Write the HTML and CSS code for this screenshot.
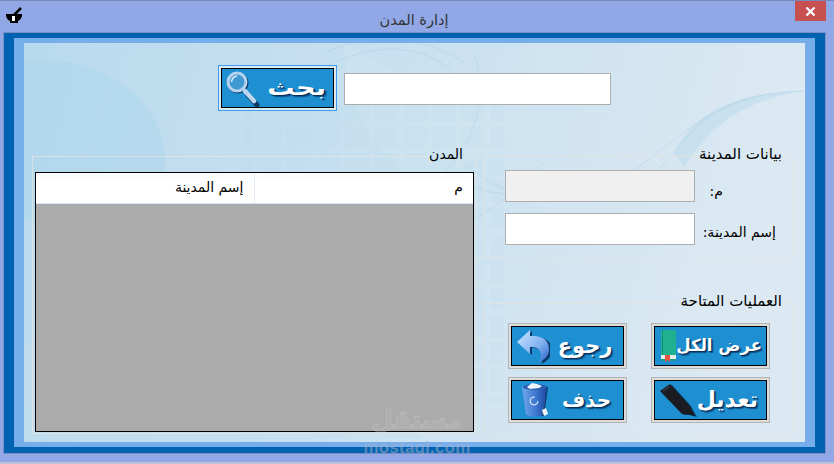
FILE: index.html
```html
<!DOCTYPE html>
<html lang="ar">
<head>
<meta charset="utf-8">
<title>إدارة المدن</title>
<link rel="stylesheet" href="styles.css">
</head>
<body>
<div class="window">
  <header class="titlebar">
    <svg class="app-icon" width="20" height="20" viewBox="0 0 20 20">
      <path d="M10 8 L17 1" stroke="#000" stroke-width="2.500" fill="none"/>
      <path d="M2 7 H18 V9 C17 12 16 13 14 14 V16 H6 V14 C4 13 3 12 2 9 Z" fill="#000"/>
      <rect x="8" y="9" width="3" height="5" fill="#fff"/>
    </svg>
    <h1 class="title">إدارة المدن</h1>
    <button class="close" type="button" aria-label="إغلاق">
      <svg width="11" height="9" viewBox="0 0 11 9"><path d="M1.500 0.500 L9.500 8.500 M9.500 0.500 L1.500 8.500" stroke="#fff" stroke-width="2.200" fill="none"/></svg>
    </button>
  </header>

  <div class="frame-dark">
    <div class="frame-light">
      <main class="content">
        <svg class="backdrop" width="781" height="399" viewBox="0 0 781 399" aria-hidden="true">
          <defs>
            <linearGradient id="bgbase" x1="0" y1="0" x2="1" y2="0.15">
              <stop offset="0" stop-color="#b9daed"/>
              <stop offset="0.45" stop-color="#c8e0f0"/>
              <stop offset="1" stop-color="#dce9f2"/>
            </linearGradient>
            <pattern id="tiles" width="29" height="27" patternUnits="userSpaceOnUse">
              <rect x="2" y="2" width="24" height="22" fill="#a9d0ea" opacity="0.09"/>
            </pattern>
          </defs>
          <rect width="781" height="399" fill="url(#bgbase)"/>
          <path d="M0 18 C70 12 130 45 140 105 C143 125 140 150 130 170 C80 190 30 190 0 175 Z" fill="#a9d5ec" opacity="0.42"/>
          <path d="M320 0 C390 40 430 60 520 40 C500 90 460 130 400 130 C350 120 320 60 320 0 Z" fill="#d4e7f3" opacity="0.3"/>
          <rect x="220" y="60" width="260" height="300" fill="url(#tiles)"/>
          <g fill="none" stroke="#a6cfe9" opacity="0.4">
            <path d="M385 160 C440 120 470 70 450 10"/>
            <path d="M410 190 C440 185 470 170 520 120"/>
            <path d="M420 132 C470 160 560 165 620 120 C660 90 690 60 750 50"/>
            <path d="M440 120 C500 175 600 170 650 110 C680 70 710 50 780 48"/>
            <path d="M300 10 C340 -10 400 -10 440 20"/>
            <path d="M310 20 C350 0 400 0 430 30"/>
          </g>
          <path d="M650 110 C670 70 710 50 780 48 C730 56 690 75 660 125 Z" fill="#a6cfe9" opacity="0.3"/>
          <path d="M0 300 C120 260 280 330 400 395 L0 398 Z" fill="#c2deef" opacity="0.35"/>
        </svg>

        <section class="search-row">
          <button class="btn btn-focus" type="button">
            <span class="btn-face">
              <svg class="btn-icon" width="38" height="38" viewBox="0 0 38 38">
                <path d="M25 25 L34 35" stroke="#0b3a68" stroke-width="5" stroke-linecap="round" transform="translate(1 1)"/>
                <circle cx="16" cy="14" r="9" fill="none" stroke="#0b3a68" stroke-width="3"/>
                <path d="M23 22 L32 32" stroke="#bcd6ef" stroke-width="4.500" stroke-linecap="round"/>
                <circle cx="15" cy="13" r="9" fill="#3f9ad2" stroke="#b5d2ee" stroke-width="3"/>
                <path d="M9.500 13 C10 9 12 7.500 15 7" fill="none" stroke="#d9ebf8" stroke-width="1.500"/>
              </svg>
              <span class="btn-label label-search"><span class="stretch">بحث</span></span>
            </span>
          </button>
          <input class="field field-search" type="text" aria-label="بحث">
        </section>

        <section class="columns">
          <fieldset class="group group-cities" dir="rtl">
            <legend>المدن</legend>
            <div class="grid-view">
              <table class="grid-table">
                <thead>
                  <tr><th class="col-id">م</th><th class="col-name">إسم المدينة</th></tr>
                </thead>
              </table>
            </div>
          </fieldset>

          <div class="side">
            <fieldset class="group group-data" dir="rtl">
              <legend>بيانات المدينة</legend>
              <div class="form-row">
                <label class="form-label label-id" for="cid">م:</label>
                <input class="field field-disabled" id="cid" type="text" disabled>
              </div>
              <div class="form-row">
                <label class="form-label label-name" for="cname">إسم المدينة:</label>
                <input class="field" id="cname" type="text">
              </div>
            </fieldset>

            <fieldset class="group group-actions" dir="rtl">
              <legend>العمليات المتاحة</legend>
              <div class="actions" dir="ltr">
                <button class="btn" type="button">
                  <span class="btn-face">
                    <svg class="btn-icon" width="38" height="38" viewBox="0 0 38 38">
                      <defs><linearGradient id="arrow" x1="0" y1="0" x2="1" y2="1"><stop offset="0" stop-color="#cfe6ff"/><stop offset="0.6" stop-color="#7fb0f0"/><stop offset="1" stop-color="#2b62c8"/></linearGradient></defs>
                      <path d="M7 16 L20 4 L20 10 C33 9 41 15 40 25 C39 31 34 35 29 37 C32 31 32 25 27 22 C25 21 22 21 20 21 L20 28 Z" fill="#0b3a68"/>
                      <path d="M5 15 L18 3 L18 9 C31 8 38 14 37 24 C36 30 32 33 27 35 C30 29 30 24 25 21 C23 20 20 20 18 20 L18 27 Z" fill="url(#arrow)"/>
                    </svg>
                    <span class="btn-label label-back">رجوع</span>
                  </span>
                </button>
                <button class="btn" type="button">
                  <span class="btn-face">
                    <svg class="btn-icon" width="24" height="38" viewBox="0 0 24 38">
                      <rect x="6" y="3" width="15" height="25" fill="#1fb08f"/>
                      <path d="M7.500 4 V27" stroke="#0d5f52" stroke-width="1" stroke-dasharray="1 1.500"/>
                      <rect x="6" y="28" width="15" height="5" fill="#e8efe8"/>
                      <rect x="6" y="32" width="15" height="1.500" fill="#1b9d80"/>
                      <path d="M10 28 H15 V35 L12.500 33 L10 35 Z" fill="#e8503f"/>
                    </svg>
                    <span class="btn-label label-all">عرض الكل</span>
                  </span>
                </button>
                <button class="btn" type="button">
                  <span class="btn-face">
                    <svg class="btn-icon" width="38" height="38" viewBox="0 0 38 38">
                      <defs><linearGradient id="bin" x1="0" y1="0" x2="1" y2="0"><stop offset="0" stop-color="#6fa8ea"/><stop offset="0.55" stop-color="#3f78d0"/><stop offset="1" stop-color="#1b469c"/></linearGradient></defs>
                      <path d="M11 6 H36 L32 35 H15 Z" fill="#0b3a68"/>
                      <path d="M10 6 C10 3 35 3 35 6 L31 34 C28 36 17 36 14 34 Z" fill="url(#bin)"/>
                      <ellipse cx="22.500" cy="6" rx="12" ry="3" fill="#2c5fb4"/>
                      <path d="M15 6 L20 2 L25 3 L30 5 L27 7 L18 8 Z" fill="#eef4fb"/>
                      <circle cx="22" cy="20" r="3.800" fill="none" stroke="#cfe2f7" stroke-width="1.300" stroke-dasharray="18 6"/>
                      <path d="M30 29 L34 27 L36 33 L32 35 Z" fill="#f2f2f2"/>
                    </svg>
                    <span class="btn-label label-delete">حذف</span>
                  </span>
                </button>
                <button class="btn" type="button">
                  <span class="btn-face">
                    <svg class="btn-icon" width="42" height="38" viewBox="0 0 42 38">
                      <path d="M7 11 L17 4 L36 25 L38 29 L42 36 L34 34 L29 34 Z" fill="#0b3a68"/>
                      <path d="M5 10 L15 3 L34 24 L36 28 L40 35 L32 33 L27 33 Z" fill="#1b1b22"/>
                      <path d="M8 10 L15 5" stroke="#4a4a55" stroke-width="1"/>
                    </svg>
                    <span class="btn-label label-edit">تعديل</span>
                  </span>
                </button>
              </div>
            </fieldset>
          </div>
        </section>
      </main>
    </div>
  </div>
  <div class="watermark" dir="rtl" aria-hidden="true">
    <span class="wm-ar">مستقل</span>
    <span class="wm-en">mostaql.com</span>
  </div>
  <div class="taskstrip"></div>
</div>
</body>
</html>
```

FILE: styles.css
```css
* { box-sizing: border-box; }

html, body {
  margin: 0;
  padding: 0;
  width: 834px;
  height: 464px;
  overflow: hidden;
}

body {
  font-family: "DejaVu Sans", "Noto Sans", sans-serif;
  color: #000;
}

.window {
  position: relative;
  width: 834px;
  height: 464px;
  background: #92a8e6;
  border-top: 1px solid #7788bb;
}

.titlebar {
  height: 31px;
  display: grid;
  grid-template-columns: 1fr auto 1fr;
  align-items: start;
}

.app-icon {
  margin: 6px 0 0 4px;
}

.title {
  margin: 10px 6px 0 0;
  font-size: 14.500px;
  line-height: 18px;
  font-weight: 400;
  color: #333;
  direction: rtl;
}

.close {
  justify-self: end;
  width: 31px;
  height: 20px;
  margin-right: 8px;
  padding: 0;
  border: 0;
  background: #c75050;
  display: flex;
  align-items: center;
  justify-content: center;
}

.frame-dark {
  width: 823px;
  height: 422px;
  margin-left: 3px;
  border: 1px solid #7d8fc6;
  background: #0063b1;
  padding: 5px 10px 6px;
}

.frame-light {
  height: 409px;
  background: #76aeec;
  padding: 5px 10px;
}

.content {
  position: relative;
  width: 781px;
  height: 399px;
  padding: 1px 0 0;
  overflow: hidden;
}

.backdrop {
  position: absolute;
  inset: 0;
}

.search-row {
  position: relative;
  display: flex;
  align-items: flex-start;
  gap: 7px;
  margin: 21px 0 0 194px;
}

.btn {
  width: 119px;
  height: 46px;
  padding: 2px;
  border: 1px solid #b4b4b4;
  background: #dcdcdc;
  display: block;
  font-family: inherit;
}

.btn-focus {
  border-color: #3d9df5;
  background: #dfe9f2;
}

.btn-face {
  display: flex;
  align-items: center;
  width: 100%;
  height: 100%;
  border: 1px solid #000;
  background: #1e8fd1;
}

.btn-icon {
  flex: none;
}

.btn-label {
  flex: 1;
  min-width: 0;
  text-align: center;
  color: #fff;
  font-weight: 700;
  line-height: 20px;
  direction: rtl;
  white-space: nowrap;
  text-shadow: 1px 1px 0 #07305a, 2px 2px 1px #0d4f86;
}

.stretch {
  display: inline-block;
  transform: scaleX(1.3);
}

.label-search { font-size: 21px; }
.label-back { font-size: 21px; padding-right: 3px; }
.label-all { font-size: 16.500px; padding-right: 4px; }
.label-delete { font-size: 20px; }
.label-edit { font-size: 22px; padding-right: 8px; }

.field {
  display: block;
  width: 267px;
  height: 32px;
  margin: 0;
  border: 1px solid #adadad;
  background: #fff;
  border-radius: 0;
  padding: 0;
}

.field-search {
  flex: none;
  margin-top: 8px;
}

.columns {
  position: relative;
  display: flex;
  align-items: flex-start;
  gap: 6px;
  margin: 37px 0 0 8px;
}

.group {
  margin: 0;
  min-width: 0;
  border: 1px solid rgba(226, 228, 224, 0.8);
}

.group legend {
  padding: 0 2px;
  font-size: 15px;
  line-height: 13px;
  height: 16px;
}

.group-cities {
  width: 445px;
  height: 286px;
  padding: 8px 2px 2px;
}

.group-cities legend {
  margin-right: 9px;
  font-size: 14px;
}

.side {
  width: 310px;
  display: flex;
  flex-direction: column;
  gap: 36px;
}

.group-data {
  height: 111px;
  padding: 6px 0 0;
}

.group-data legend { margin-right: 8px; }

.group-actions {
  height: 140px;
  padding: 12px 0 0;
}

.group-actions legend { margin-right: 8px; }

.grid-view {
  height: 260px;
  border: 1px solid #000;
  background: #ababab;
}

.grid-table {
  width: 100%;
  border-collapse: collapse;
  table-layout: fixed;
}

.grid-table th {
  height: 30px;
  padding: 0 10px 2px;
  font-size: 14px;
  font-weight: 400;
  text-align: right;
  background: linear-gradient(#f9fbfd, #fff 30%);
  border-bottom: 1px solid #d8e5f4;
}

.col-id {
  width: 219px;
  border-left: 1px solid #e4eef9;
}

.form-row {
  display: flex;
  align-items: center;
  height: 32px;
  margin-bottom: 11px;
}

.form-label {
  width: 97px;
  font-size: 14px;
  line-height: 16px;
}

.label-id { padding: 10px 69px 0 0; }
.label-name { padding: 6px 16px 0 0; }

.form-row .field { width: 190px; }

.field-disabled { background: #f0f0f0; }

.actions {
  display: grid;
  grid-template-columns: 119px 119px;
  column-gap: 24px;
  row-gap: 8px;
  justify-content: end;
  padding-right: 22px;
}

.watermark {
  position: absolute;
  left: 362px;
  top: 404px;
  width: 110px;
  display: flex;
  flex-direction: column;
  align-items: center;
  gap: 6px;
  pointer-events: none;
}

.wm-ar {
  font-size: 25px;
  line-height: 30px;
  height: 30px;
  font-weight: 700;
  color: rgba(205, 205, 210, 0.12);
  -webkit-text-stroke: 1px rgba(205, 205, 210, 0.35);
}

.wm-en {
  font-family: "Liberation Sans", sans-serif;
  font-size: 17px;
  line-height: 14px;
  font-weight: 700;
  color: rgba(170, 180, 200, 0.5);
  direction: ltr;
  letter-spacing: 0.200px;
}

.taskstrip {
  position: absolute;
  left: 0;
  right: 0;
  bottom: 0;
  height: 2px;
  background: #b9c2d6;
}
```
